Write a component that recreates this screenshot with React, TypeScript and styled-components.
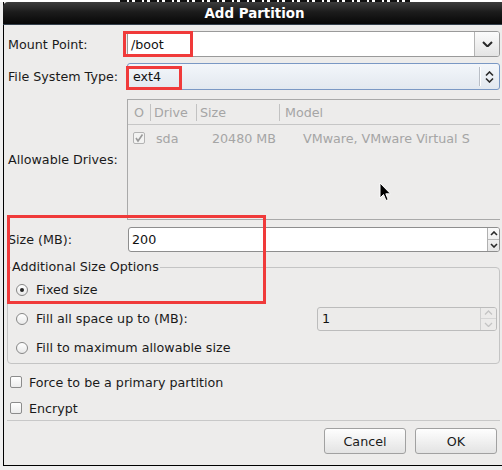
import React from "react";
import styled, { createGlobalStyle } from "styled-components";

const GlobalStyle = createGlobalStyle`
  html, body { margin: 0; padding: 0; }
  body {
    background: #eeeeee;
    font-family: "DejaVu Sans", "Noto Sans", sans-serif;
    font-size: 12.7px;
    color: #1a1a1a;
  }
  * { box-sizing: border-box; }
`;

const Screen = styled.div`
  position: relative;
  width: 502px;
  height: 470px;
  overflow: hidden;
  background: #efefef;
`;

const BehindStrip = styled.div`
  height: 2px;
  background: #ffffff;
  display: flex;
`;

const BehindText = styled.div`
  margin-left: 120px;
  width: 290px;
  height: 2px;
  background: repeating-linear-gradient(90deg, #111 0 7px, transparent 7px 9px, #111 9px 12px, transparent 12px 15px);
`;

const Window = styled.div`
  margin-left: 3px;
  width: 499px;
  height: 464px;
  border-left: 1px solid #000;
  border-bottom: 1px solid #000;
  background: #edeceb;
  display: flex;
  flex-direction: column;
`;

const TitleBar = styled.div`
  flex: none;
  height: 23px;
  margin-left: -1px;
  padding-left: 4px;
  display: flex;
  align-items: center;
  justify-content: center;
  background: linear-gradient(#3d3d3d, #1c1c1c 45%, #070707);
  border-top-left-radius: 5px;
  border-bottom: 1px solid #34404c;
  color: #ffffff;
  font-weight: bold;
  font-size: 13.4px;
`;

const Body = styled.div`
  flex: 1;
  padding: 5px 2px 0 3px;
  display: flex;
  flex-direction: column;
`;

const FormRow = styled.div<{ $gap: number; $h: number }>`
  display: grid;
  grid-template-columns: 120px 1fr;
  align-items: center;
  margin-top: ${(p) => p.$gap}px;
  height: ${(p) => p.$h}px;
`;

const FieldLabel = styled.div`
  padding-left: 1px;
  white-space: nowrap;
`;

const MountCombo = styled.div`
  display: flex;
  height: 26px;
  border: 1px solid #9a9a9a;
  border-radius: 3px;
  background: #ffffff;
  overflow: hidden;
`;

const EntryText = styled.div<{ $pad: number }>`
  flex: 1;
  display: flex;
  align-items: center;
  padding-left: ${(p) => p.$pad}px;
  color: #111;
`;

const ComboButton = styled.div`
  width: 25px;
  display: flex;
  align-items: center;
  justify-content: center;
  border-left: 1px solid #b4b4b4;
  background: linear-gradient(#fbfbfb, #e4e4e4);
`;

const SelectCombo = styled.div`
  display: flex;
  align-items: center;
  height: 27px;
  border: 1px solid #7a98c4;
  border-radius: 3px;
  background: linear-gradient(#f3f6fa, #e2e8ef);
`;

const SelectSep = styled.div`
  width: 1px;
  height: 19px;
  background: #b9bec6;
  box-shadow: 1px 0 0 #ffffff;
`;

const SelectArrows = styled.div`
  width: 19px;
  display: flex;
  justify-content: center;
`;

const DriveTable = styled.div`
  height: 121px;
  border: 1px solid #a9a9a9;
  border-right: none;
  background: #edeceb;
  color: #a5a5a5;
`;

const TableGrid = styled.div<{ $h: number; $line?: boolean }>`
  display: grid;
  grid-template-columns: 22px 46px 83px 1fr;
  align-items: center;
  height: ${(p) => p.$h}px;
  border-bottom: ${(p) => (p.$line ? "1px solid #c6c6c6" : "none")};
`;

const HeadCell = styled.div<{ $sep?: boolean; $pad: number }>`
  height: 17px;
  line-height: 17px;
  padding-left: ${(p) => p.$pad}px;
  border-left: ${(p) => (p.$sep ? "1px solid #c2c2c2" : "none")};
  white-space: nowrap;
`;

const Cell = styled.div<{ $pad?: number; $right?: boolean }>`
  display: flex;
  align-items: center;
  justify-content: ${(p) => (p.$right ? "flex-end" : "flex-start")};
  padding-left: ${(p) => p.$pad ?? 0}px;
  padding-right: ${(p) => (p.$right ? 3 : 0)}px;
  white-space: nowrap;
  overflow: hidden;
`;

const CheckBox = styled.div<{ $disabled?: boolean }>`
  width: 12px;
  height: 12px;
  flex: none;
  border: 1px solid ${(p) => (p.$disabled ? "#b3b3b3" : "#8c8c8c")};
  border-radius: 2px;
  background: ${(p) => (p.$disabled ? "#f3f3f2" : "linear-gradient(#ffffff, #ececec)")};
  display: flex;
  align-items: center;
  justify-content: center;
`;

const SpinEntry = styled.div<{ $disabled?: boolean }>`
  display: flex;
  height: ${(p) => (p.$disabled ? 24 : 25)}px;
  border: 1px solid ${(p) => (p.$disabled ? "#bcbcbc" : "#8e8e8e")};
  border-radius: 3px;
  background: ${(p) => (p.$disabled ? "#ecebea" : "#ffffff")};
  color: ${(p) => (p.$disabled ? "#a8a8a8" : "#111")};
  overflow: hidden;
`;

const SpinButtons = styled.div<{ $w: number; $disabled?: boolean }>`
  width: ${(p) => p.$w}px;
  display: flex;
  flex-direction: column;
  border-left: 1px solid ${(p) => (p.$disabled ? "#cfcfcf" : "#b0b0b0")};
  background: ${(p) => (p.$disabled ? "#ecebea" : "linear-gradient(#fafafa, #e6e6e6)")};
`;

const SpinHalf = styled.div<{ $top?: boolean; $disabled?: boolean }>`
  flex: 1;
  display: flex;
  align-items: center;
  justify-content: center;
  border-bottom: ${(p) => (p.$top ? `1px solid ${p.$disabled ? "#d6d6d6" : "#b8b8b8"}` : "none")};
`;

const SizeField = styled.div`
  margin-left: 1px;
`;

const Frame = styled.fieldset`
  margin: 7px 0 0 0;
  padding: 0 0 1px 0;
  border: 1px solid #c4c4c4;
  border-radius: 4px;
  min-width: 0;
`;

const FrameLegend = styled.legend`
  margin-left: 3px;
  padding: 0 1px;
  line-height: 16px;
  color: #1a1a1a;
`;

const OptionRow = styled.div<{ $h: number }>`
  display: flex;
  align-items: center;
  gap: 8px;
  height: ${(p) => p.$h}px;
  padding-left: 8px;
  padding-right: 2px;
`;

const Radio = styled.div<{ $checked?: boolean }>`
  width: 12px;
  height: 12px;
  flex: none;
  border-radius: 50%;
  border: 1px solid #878787;
  background: linear-gradient(#ffffff, #e9e9e9);
  display: flex;
  align-items: center;
  justify-content: center;
  &::after {
    content: "";
    width: 4px;
    height: 4px;
    border-radius: 50%;
    background: #262626;
    display: ${(p) => (p.$checked ? "block" : "none")};
  }
`;

const DisabledSpin = styled.div`
  margin-left: auto;
  width: 180px;
`;

const CheckRow = styled.div<{ $gap: number }>`
  display: flex;
  align-items: center;
  gap: 7px;
  height: 22px;
  margin-top: ${(p) => p.$gap}px;
  padding-left: 3px;
`;

const Separator = styled.div`
  margin-top: 1px;
  height: 1px;
  background: #c8c8c8;
`;

const ButtonBar = styled.div`
  margin-top: 7px;
  display: flex;
  justify-content: flex-end;
  gap: 9px;
  padding-right: 3px;
`;

const DialogButton = styled.button`
  width: 82px;
  height: 26px;
  border: 1px solid #a1a1a1;
  border-radius: 3px;
  background: linear-gradient(#fefefe, #e3e3e3);
  font-family: inherit;
  font-size: 12.7px;
  color: #1a1a1a;
  padding: 0;
`;

const RedMark = styled.div<{ $x: number; $y: number; $w: number; $h: number }>`
  position: absolute;
  left: ${(p) => p.$x}px;
  top: ${(p) => p.$y}px;
  width: ${(p) => p.$w}px;
  height: ${(p) => p.$h}px;
  border: 3px solid #f03a3a;
  pointer-events: none;
`;

const Pointer = styled.svg`
  position: absolute;
  left: 379px;
  top: 182px;
`;

const ChevronDown = ({ size = 10, color = "#2a2a2a", w = 2 }: { size?: number; color?: string; w?: number }) => (
  <svg width={size} height={size / 2 + 1} viewBox={`0 0 ${size} ${size / 2 + 1}`}>
    <path d={`M1 1 L${size / 2} ${size / 2} L${size - 1} 1`} fill="none" stroke={color} strokeWidth={w} />
  </svg>
);

const ChevronUp = ({ size = 10, color = "#2a2a2a", w = 2 }: { size?: number; color?: string; w?: number }) => (
  <svg width={size} height={size / 2 + 1} viewBox={`0 0 ${size} ${size / 2 + 1}`}>
    <path d={`M1 ${size / 2} L${size / 2} 1 L${size - 1} ${size / 2}`} fill="none" stroke={color} strokeWidth={w} />
  </svg>
);

const UpDown = () => (
  <svg width="9" height="12" viewBox="0 0 9 12">
    <path d="M1 4.5 L4.5 1 L8 4.5" fill="none" stroke="#2a2a2a" strokeWidth="1.6" />
    <path d="M1 7.5 L4.5 11 L8 7.5" fill="none" stroke="#2a2a2a" strokeWidth="1.6" />
  </svg>
);

const Tick = ({ color }: { color: string }) => (
  <svg width="10" height="10" viewBox="0 0 10 10">
    <path d="M2 5 L4 8 L8.5 1.5" fill="none" stroke={color} strokeWidth="1.6" />
  </svg>
);

export default function App() {
  return (
    <>
      <GlobalStyle />
      <Screen>
        <BehindStrip>
          <BehindText />
        </BehindStrip>
        <Window>
          <TitleBar>Add Partition</TitleBar>
          <Body>
            <FormRow $gap={1} $h={26}>
              <FieldLabel>Mount Point:</FieldLabel>
              <MountCombo>
                <EntryText $pad={3}>/boot</EntryText>
                <ComboButton>
                  <ChevronDown size={11} />
                </ComboButton>
              </MountCombo>
            </FormRow>
            <FormRow $gap={6} $h={27}>
              <FieldLabel>File System Type:</FieldLabel>
              <SelectCombo>
                <EntryText $pad={5}>ext4</EntryText>
                <SelectSep />
                <SelectArrows>
                  <UpDown />
                </SelectArrows>
              </SelectCombo>
            </FormRow>
            <FormRow $gap={9} $h={121}>
              <FieldLabel>Allowable Drives:</FieldLabel>
              <DriveTable>
                <TableGrid $h={25} $line>
                  <HeadCell $pad={6}>O</HeadCell>
                  <HeadCell $sep $pad={3}>Drive</HeadCell>
                  <HeadCell $sep $pad={3}>Size</HeadCell>
                  <HeadCell $sep $pad={5}>Model</HeadCell>
                </TableGrid>
                <TableGrid $h={26}>
                  <Cell $pad={5}>
                    <CheckBox $disabled>
                      <Tick color="#9a9a9a" />
                    </CheckBox>
                  </Cell>
                  <Cell $pad={6}>sda</Cell>
                  <Cell $right>20480 MB</Cell>
                  <Cell $pad={24}>VMware, VMware Virtual S</Cell>
                </TableGrid>
              </DriveTable>
            </FormRow>
            <FormRow $gap={7} $h={25}>
              <FieldLabel>Size (MB):</FieldLabel>
              <SizeField>
                <SpinEntry>
                  <EntryText $pad={3}>200</EntryText>
                  <SpinButtons $w={12}>
                    <SpinHalf $top>
                      <ChevronUp size={8} w={1.6} />
                    </SpinHalf>
                    <SpinHalf>
                      <ChevronDown size={8} w={1.6} />
                    </SpinHalf>
                  </SpinButtons>
                </SpinEntry>
              </SizeField>
            </FormRow>
            <Frame>
              <FrameLegend>Additional Size Options</FrameLegend>
              <OptionRow $h={29}>
                <Radio $checked />
                <span>Fixed size</span>
              </OptionRow>
              <OptionRow $h={29}>
                <Radio />
                <span>Fill all space up to (MB):</span>
                <DisabledSpin>
                  <SpinEntry $disabled>
                    <EntryText $pad={4}>1</EntryText>
                    <SpinButtons $w={16} $disabled>
                      <SpinHalf $top $disabled>
                        <ChevronUp size={9} w={1.3} color="#c4c4c4" />
                      </SpinHalf>
                      <SpinHalf $disabled>
                        <ChevronDown size={9} w={1.3} color="#c4c4c4" />
                      </SpinHalf>
                    </SpinButtons>
                  </SpinEntry>
                </DisabledSpin>
              </OptionRow>
              <OptionRow $h={29}>
                <Radio />
                <span>Fill to maximum allowable size</span>
              </OptionRow>
            </Frame>
            <CheckRow $gap={7}>
              <CheckBox />
              <span>Force to be a primary partition</span>
            </CheckRow>
            <CheckRow $gap={4}>
              <CheckBox />
              <span>Encrypt</span>
            </CheckRow>
            <Separator />
            <ButtonBar>
              <DialogButton>Cancel</DialogButton>
              <DialogButton>OK</DialogButton>
            </ButtonBar>
          </Body>
        </Window>
        <RedMark $x={123} $y={31} $w={70} $h={26} />
        <RedMark $x={126} $y={66} $w={56} $h={24} />
        <RedMark $x={7} $y={215} $w={259} $h={89} />
        <Pointer width="13" height="20" viewBox="0 0 13 20">
          <path d="M1 1 L1 16 L4.5 12.5 L7 18.5 L9.2 17.6 L6.8 11.8 L11.5 11.8 Z" fill="#000" stroke="#fff" strokeWidth="1" />
        </Pointer>
      </Screen>
    </>
  );
}
